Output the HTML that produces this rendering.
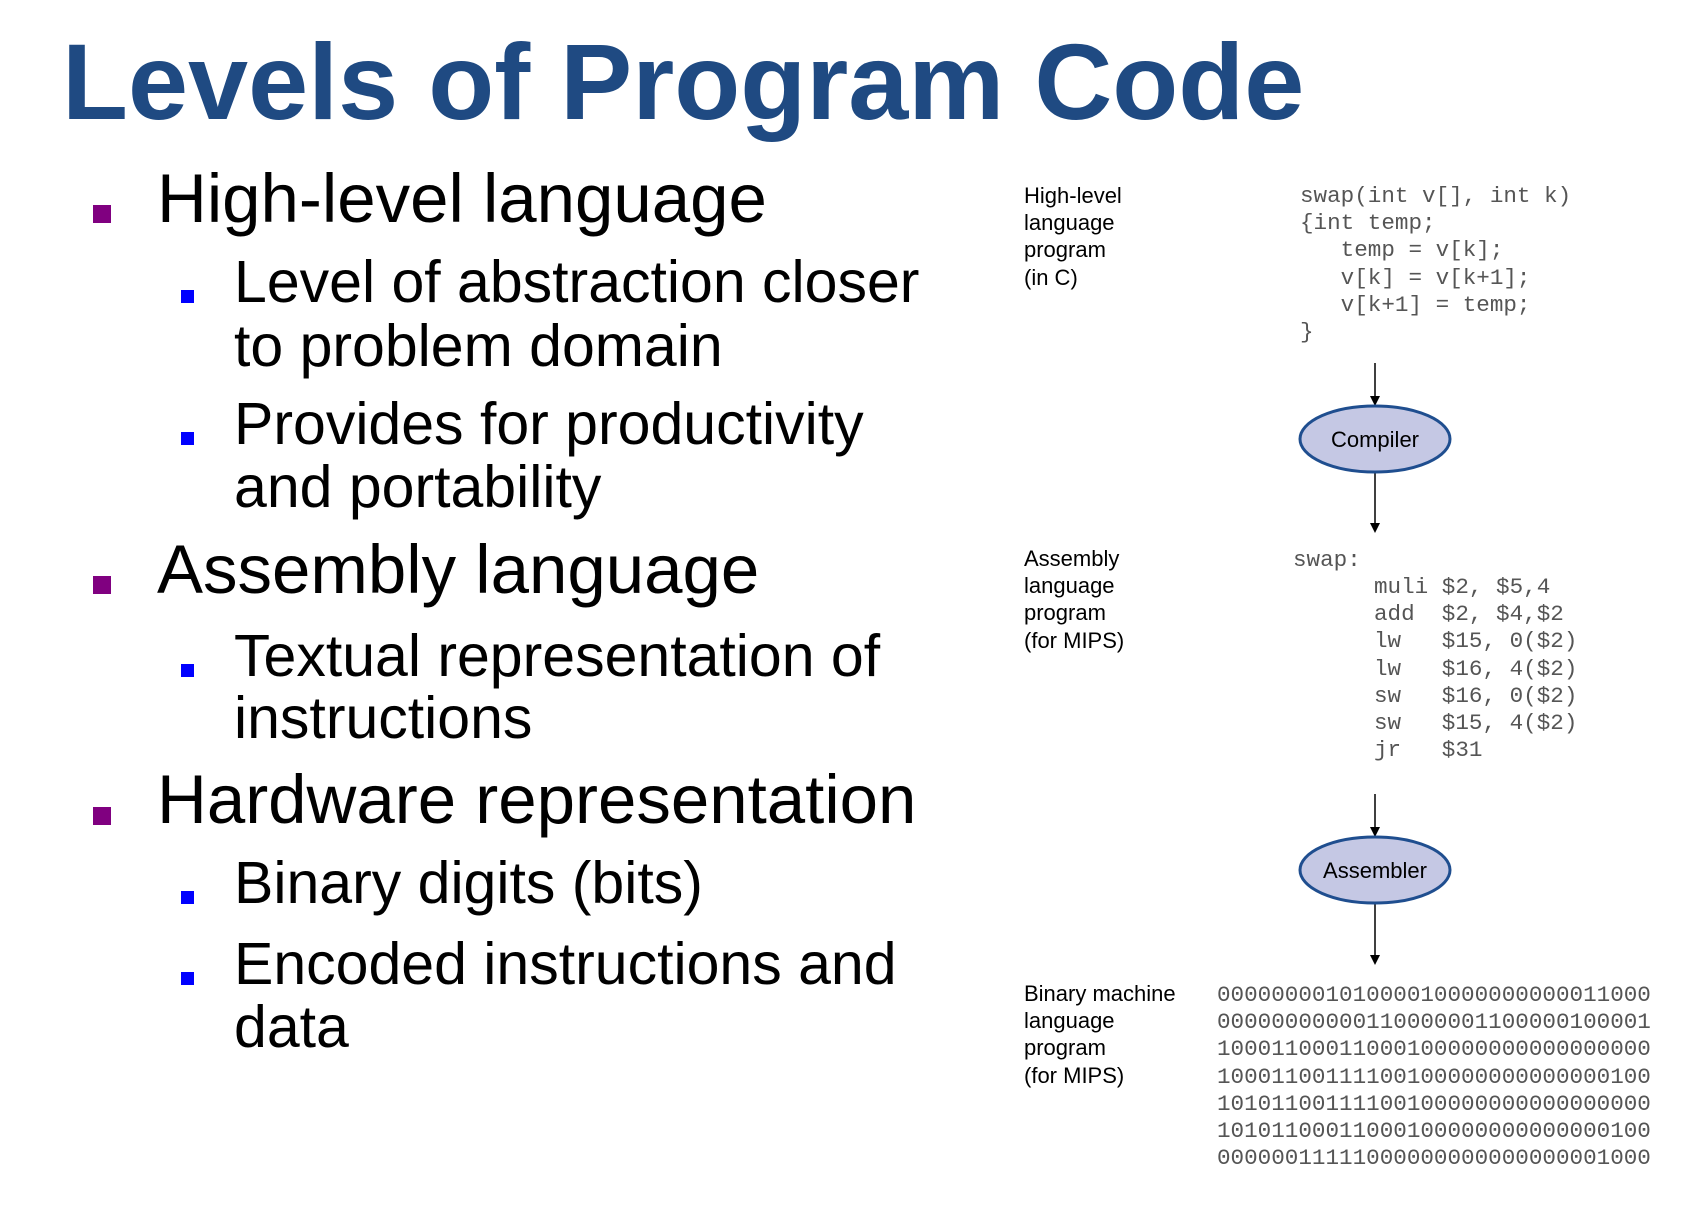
<!DOCTYPE html>
<html><head><meta charset="utf-8"><style>
html,body{margin:0;padding:0;background:#fff;}
body{width:1700px;height:1210px;position:relative;overflow:hidden;font-family:"Liberation Sans",sans-serif;}
.t{position:absolute;white-space:nowrap;line-height:1;}
.title{left:62px;top:28px;font-size:108px;font-weight:bold;color:#1f4a82;}
.l1{font-size:69px;color:#000;left:157px;}
.l2{font-size:59px;color:#000;left:234px;}
.sq1{position:absolute;width:18px;height:18px;background:#800080;left:93px;}
.sq2{position:absolute;width:13px;height:13px;background:#0000ff;left:181px;}
svg text.m{white-space:pre;}
</style></head><body>
<div class="t title">Levels of Program Code</div>

<div class="sq1" style="top:205px"></div>
<div class="t l1" style="top:164px">High-level language</div>
<div class="sq2" style="top:290px"></div>
<div class="t l2" style="top:253px">Level of abstraction closer</div>
<div class="t l2" style="top:317px">to problem domain</div>
<div class="sq2" style="top:432px"></div>
<div class="t l2" style="top:395px">Provides for productivity</div>
<div class="t l2" style="top:458px">and portability</div>
<div class="sq1" style="top:576px"></div>
<div class="t l1" style="top:535px">Assembly language</div>
<div class="sq2" style="top:664px"></div>
<div class="t l2" style="top:627px">Textual representation of</div>
<div class="t l2" style="top:689px">instructions</div>
<div class="sq1" style="top:807px"></div>
<div class="t l1" style="top:765px">Hardware representation</div>
<div class="sq2" style="top:891px"></div>
<div class="t l2" style="top:854px">Binary digits (bits)</div>
<div class="sq2" style="top:972px"></div>
<div class="t l2" style="top:935px">Encoded instructions and</div>
<div class="t l2" style="top:998px">data</div>

<svg width="1700" height="1210" style="position:absolute;left:0;top:0" xmlns="http://www.w3.org/2000/svg">
<g transform="translate(-6,-2)">
<g font-family="Liberation Sans, sans-serif" font-size="22" fill="#000">
<text x="1030" y="205">High-level</text><text x="1030" y="232">language</text><text x="1030" y="259">program</text><text x="1030" y="287">(in C)</text>
<text x="1030" y="568">Assembly</text><text x="1030" y="595">language</text><text x="1030" y="622">program</text><text x="1030" y="650">(for MIPS)</text>
<text x="1030" y="1003">Binary machine</text><text x="1030" y="1030">language</text><text x="1030" y="1057">program</text><text x="1030" y="1085">(for MIPS)</text>
</g>
<g font-family="Liberation Mono, monospace" font-size="22.6" fill="#555">
<text class="m" x="1306" y="204">swap(int v[], int k)</text>
<text class="m" x="1306" y="231">{int temp;</text>
<text class="m" x="1306" y="258">   temp = v[k];</text>
<text class="m" x="1306" y="286">   v[k] = v[k+1];</text>
<text class="m" x="1306" y="313">   v[k+1] = temp;</text>
<text class="m" x="1306" y="340">}</text>
<text class="m" x="1299" y="568">swap:</text>
<text class="m" x="1380" y="595">muli $2, $5,4</text>
<text class="m" x="1380" y="622">add  $2, $4,$2</text>
<text class="m" x="1380" y="649">lw   $15, 0($2)</text>
<text class="m" x="1380" y="677">lw   $16, 4($2)</text>
<text class="m" x="1380" y="704">sw   $16, 0($2)</text>
<text class="m" x="1380" y="731">sw   $15, 4($2)</text>
<text class="m" x="1380" y="758">jr   $31</text>
<text x="1223" y="1003">00000000101000010000000000011000</text>
<text x="1223" y="1030">00000000000110000001100000100001</text>
<text x="1223" y="1057">10001100011000100000000000000000</text>
<text x="1223" y="1085">10001100111100100000000000000100</text>
<text x="1223" y="1112">10101100111100100000000000000000</text>
<text x="1223" y="1139">10101100011000100000000000000100</text>
<text x="1223" y="1166">00000011111000000000000000001000</text>
</g>
<g stroke="#000" stroke-width="1.5">
<line x1="1381" y1="365" x2="1381" y2="400"/><line x1="1381" y1="475" x2="1381" y2="527"/>
<line x1="1381" y1="796" x2="1381" y2="831"/><line x1="1381" y1="906" x2="1381" y2="959"/>
</g>
<g fill="#000">
<path d="M1376 398 L1386 398 L1381 408 Z"/><path d="M1376 525 L1386 525 L1381 535 Z"/>
<path d="M1376 829 L1386 829 L1381 839 Z"/><path d="M1376 957 L1386 957 L1381 967 Z"/>
</g>
<ellipse cx="1381" cy="441" rx="75" ry="33" fill="#c5c8e4" stroke="#1f4e8f" stroke-width="3"/>
<ellipse cx="1381" cy="872" rx="75" ry="33" fill="#c5c8e4" stroke="#1f4e8f" stroke-width="3"/>
<g font-family="Liberation Sans, sans-serif" font-size="22" fill="#000" text-anchor="middle">
<text x="1381" y="449">Compiler</text><text x="1381" y="880">Assembler</text>
</g>
</g>
</svg>
</body></html>
